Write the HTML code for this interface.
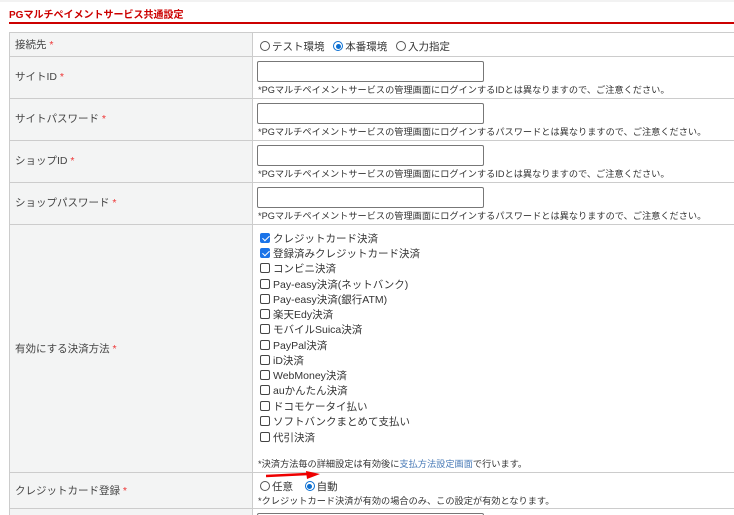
<!DOCTYPE html>
<html><head><meta charset="utf-8"><style>
*{margin:0;padding:0;box-sizing:border-box}
html,body{width:734px;height:515px;overflow:hidden}
body{background:#fff;font-family:"Liberation Sans","Noto Sans CJK JP",sans-serif;color:#333;font-size:10.5px;position:relative}
.a{position:absolute;white-space:nowrap}
.top{position:absolute;left:0;top:0;width:734px;height:2px;background:#f2f2f2}
.title{left:9px;top:6px;font-size:10px;font-weight:bold;color:#c00}
.red{position:absolute;left:9px;top:22px;width:725px;height:2px;background:#c00}
.row{position:absolute;left:9px;width:740px;border-top:1px solid #ccc}
.lab{position:absolute;left:9px;width:244px;background:#f3f4f4;border-left:1px solid #ccc;border-right:1px solid #ccc}
.l{left:15px;font-size:10.5px;color:#444}
.st{color:#e33}
.inp{position:absolute;left:257px;width:227px;height:21px;border:1px solid #777;border-radius:2px;background:#fff}
.note{left:258px;font-size:9.2px;color:#333}
.rad{display:inline-block;width:10px;height:10px;border:1px solid #555;border-radius:50%;vertical-align:-1px;margin-right:2px;position:relative}
.rad.on{border-color:#0a6ed1}
.rad.on::after{content:"";position:absolute;left:1.5px;top:1.5px;width:5px;height:5px;border-radius:50%;background:#0a6ed1}
.cb{display:inline-block;width:10px;height:10px;border:1px solid #444;border-radius:2px;vertical-align:-1px;margin-right:3px;position:relative}
.cb.on{background:#1a73e8;border-color:#1a73e8}
.cb.on::after{content:"";position:absolute;left:2.5px;top:0px;width:3px;height:6px;border:solid #fff;border-width:0 1.5px 1.5px 0;transform:rotate(45deg)}
.ci{left:260px;font-size:10.5px}
</style></head><body>
<div class="top"></div>
<div class="a title">PGマルチペイメントサービス共通設定</div>
<div class="red"></div>

<div class="lab" style="top:32px;height:483px"></div>
<div class="row" style="top:32px"></div>
<div class="row" style="top:56px"></div>
<div class="row" style="top:98px"></div>
<div class="row" style="top:140px"></div>
<div class="row" style="top:182px"></div>
<div class="row" style="top:224px"></div>
<div class="row" style="top:472px"></div>
<div class="row" style="top:508px"></div>

<div class="a l" style="top:37px">接続先 <span class="st">*</span></div>
<div class="a" style="left:260px;top:39px"><span class="rad"></span>テスト環境&nbsp;&nbsp;&nbsp;<span class="rad on"></span>本番環境&nbsp;&nbsp;&nbsp;<span class="rad"></span>入力指定</div>

<div class="a l" style="top:69px">サイトID <span class="st">*</span></div>
<div class="inp" style="top:61px"></div>
<div class="a note" style="top:82px">*PGマルチペイメントサービスの管理画面にログインするIDとは異なりますので、ご注意ください。</div>

<div class="a l" style="top:111px">サイトパスワード <span class="st">*</span></div>
<div class="inp" style="top:103px"></div>
<div class="a note" style="top:124px">*PGマルチペイメントサービスの管理画面にログインするパスワードとは異なりますので、ご注意ください。</div>

<div class="a l" style="top:153px">ショップID <span class="st">*</span></div>
<div class="inp" style="top:145px"></div>
<div class="a note" style="top:166px">*PGマルチペイメントサービスの管理画面にログインするIDとは異なりますので、ご注意ください。</div>

<div class="a l" style="top:195px">ショップパスワード <span class="st">*</span></div>
<div class="inp" style="top:187px"></div>
<div class="a note" style="top:208px">*PGマルチペイメントサービスの管理画面にログインするパスワードとは異なりますので、ご注意ください。</div>

<div class="a l" style="top:341px">有効にする決済方法 <span class="st">*</span></div>
<div class="a ci" style="top:231px"><span class="cb on"></span>クレジットカード決済</div>
<div class="a ci" style="top:246px"><span class="cb on"></span>登録済みクレジットカード決済</div>
<div class="a ci" style="top:261px"><span class="cb"></span>コンビニ決済</div>
<div class="a ci" style="top:277px"><span class="cb"></span>Pay-easy決済(ネットバンク)</div>
<div class="a ci" style="top:292px"><span class="cb"></span>Pay-easy決済(銀行ATM)</div>
<div class="a ci" style="top:307px"><span class="cb"></span>楽天Edy決済</div>
<div class="a ci" style="top:322px"><span class="cb"></span>モバイルSuica決済</div>
<div class="a ci" style="top:338px"><span class="cb"></span>PayPal決済</div>
<div class="a ci" style="top:353px"><span class="cb"></span>iD決済</div>
<div class="a ci" style="top:368px"><span class="cb"></span>WebMoney決済</div>
<div class="a ci" style="top:383px"><span class="cb"></span>auかんたん決済</div>
<div class="a ci" style="top:399px"><span class="cb"></span>ドコモケータイ払い</div>
<div class="a ci" style="top:414px"><span class="cb"></span>ソフトバンクまとめて支払い</div>
<div class="a ci" style="top:430px"><span class="cb"></span>代引決済</div>
<div class="a note" style="top:456px">*決済方法毎の詳細設定は有効後に<span style="color:#4a7bb7">支払方法設定画面</span>で行います。</div>

<div class="a l" style="top:483px">クレジットカード登録 <span class="st">*</span></div>
<svg class="a" style="left:266px;top:471px" width="54" height="10"><line x1="0" y1="5" x2="42" y2="3" stroke="#e00" stroke-width="2.5"/><polygon points="40,0 54,3 41,8" fill="#e00"/></svg>
<div class="a" style="left:260px;top:479px"><span class="rad"></span>任意&nbsp;&nbsp;&nbsp;&nbsp;<span class="rad on"></span>自動</div>
<div class="a note" style="top:493px">*クレジットカード決済が有効の場合のみ、この設定が有効となります。</div>
<div class="inp" style="top:513px"></div>
</body></html>
